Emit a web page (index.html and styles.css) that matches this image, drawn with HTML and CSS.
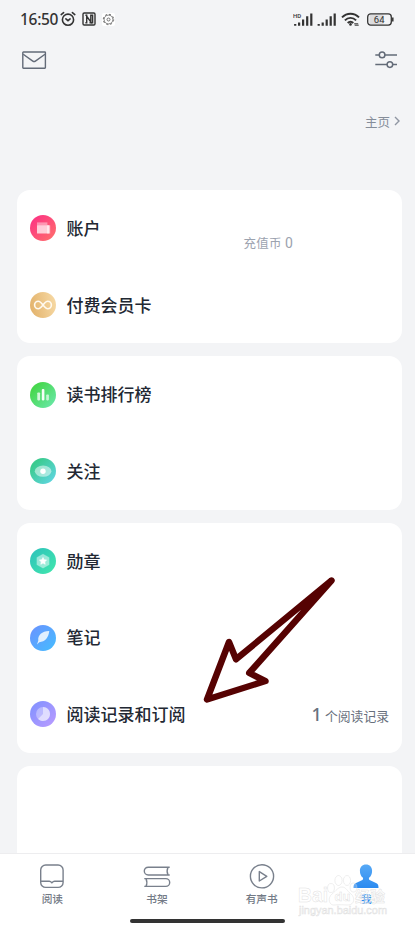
FILE: index.html
```html
<!DOCTYPE html>
<html lang="zh-CN">
<head>
    <meta charset="UTF-8">
    <meta name="viewport" content="width=device-width, initial-scale=1.0">
    <title>我</title>
    <link rel="stylesheet" href="styles.css">
</head>
<body>
    <div class="app">
        <div class="status-bar">
            <div class="status-left">
                <span class="clock">16:50</span>
                <svg class="status-alarm" width="16" height="16" viewBox="0 0 16 16" fill="none" stroke="#333" stroke-width="1.6" stroke-linecap="round">
                    <circle cx="8" cy="8.7" r="5.6"/>
                    <path d="M1.2 3.6 3.6 1.6M14.8 3.6 12.4 1.6M5.9 7.8 8 9.7 10.1 7.9"/>
                </svg>
                <svg class="status-nfc" width="14" height="14" viewBox="0 0 14 14" fill="none" stroke="#333" stroke-width="1.4">
                    <rect x="1" y="1" width="12" height="12" rx="1.2"/>
                    <path d="M3.4 10.8h1.3V4.2L8.8 10V3.3h1.8v7.4H7.5M3.4 3.3h2"/>
                </svg>
                <svg class="status-gear" width="13" height="13" viewBox="0 0 13 13">
                    <rect width="13" height="13" rx="2" fill="#fff"/>
                    <circle cx="6.5" cy="6.5" r="4.4" fill="none" stroke="#666" stroke-width=".8"/>
                    <circle cx="6.5" cy="6.5" r="5.2" fill="none" stroke="#666" stroke-width="1" stroke-dasharray="2 2.08"/>
                    <circle cx="6.5" cy="6.5" r="1.5" fill="none" stroke="#666" stroke-width=".9"/>
                </svg>
            </div>
            <div class="status-right">
                <svg width="20" height="14" viewBox="0 0 20 14" fill="#333">
                    <path d="M1.1 12h2.2v1.7H1.1zM5 10.4h2.2v3.3H5zM9 7.6h2.2v6.1H9zM13.1 4.3h2.2v9.4h-2.2zM17.2 1.6h2.2v12.1h-2.2z"/>
                    <text class="hd-label" x="0" y="5.5">HD</text>
                </svg>
                <svg width="20" height="14" viewBox="0 0 20 14" fill="#333">
                    <path d="M.6 12h2.2v1.7H.6zM4.6 10.4h2.2v3.3H4.6zM8.6 7.6h2.2v6.1H8.6zM12.6 4.3h2.2v9.4h-2.2zM16.6 1.6h2.2v12.1h-2.2z"/>
                </svg>
                <svg width="19" height="14" viewBox="0 0 19 14" fill="none" stroke="#333" stroke-width="1.9">
                    <path d="M1 5.4C5.8.5 13.2.5 18 5.4M3.9 8.3C7.1 5 11.9 5 15.1 8.3M6.7 11C8.3 9.3 10.7 9.3 12.3 11"/>
                    <circle cx="9.5" cy="12.4" r="1.3" fill="#333" stroke="none"/>
                    <path d="M13.2 11.8h4M13.7 13.2h4" stroke-width="1"/>
                </svg>
                <svg class="battery" width="27" height="13" viewBox="0 0 27 13">
                    <path d="M2.5 1.5h14v10h-14z" fill="#dcdcde"/>
                    <rect x=".7" y=".9" width="23.6" height="11.2" rx="3" fill="none" stroke="#333" stroke-width="1.3"/>
                    <path d="M25.8 4.4v4.2" stroke="#333" stroke-width="1.5"/>
                    <text class="battery-level" x="12.2" y="9.8" text-anchor="middle">64</text>
                </svg>
            </div>
        </div>

        <div class="toolbar">
            <svg width="26" height="20" viewBox="0 0 26 20" fill="none" stroke="#636b78" stroke-width="1.4" stroke-linejoin="round">
                <rect x="1.8" y="2" width="22.6" height="16.2" rx=".6"/>
                <path d="m2.2 4.2 9.6 6.9q1.3.9 2.6 0L24 4.2"/>
            </svg>
            <svg width="24" height="20" viewBox="0 0 24 20" fill="none" stroke="#636b78" stroke-width="1.5">
                <path d="M1.3 4.9h4M10.9 4.9H23M1.3 14.6h11.8M18.7 14.6H23"/>
                <circle cx="8.1" cy="4.9" r="2.8"/>
                <circle cx="15.9" cy="14.6" r="2.8"/>
            </svg>
        </div>

        <div class="profile">
            <a href="#" class="home-link">主页
                <svg width="6" height="10" viewBox="0 0 6 10" fill="none" stroke="#8f96a2" stroke-width="1.4"><path d="m1 1 4 4-4 4"/></svg>
            </a>
        </div>

        <div class="cards">
            <div class="card">
                <a href="#" class="row">
                    <svg class="row-icon" viewBox="0 0 26 26">
                        <defs><linearGradient id="g-account" x1="0" y1="0" x2="1" y2="1"><stop offset=".1" stop-color="#fc3483"/><stop offset=".9" stop-color="#ff6b6e"/></linearGradient></defs>
                        <circle cx="13" cy="13" r="13" fill="url(#g-account)"/>
                        <path d="M7 7.4h10.4v3H7z" fill="#fff" opacity=".42"/>
                        <path d="M17 10.3h3.2v8.2H17z" fill="#fff" opacity=".5"/>
                        <rect x="7" y="10.2" width="12.3" height="8.4" rx=".4" fill="#fff" opacity=".72"/>
                    </svg>
                    <span class="row-title">账户</span>
                    <span class="balance">充值币 <span class="balance-amount">0</span></span>
                </a>
                <a href="#" class="row">
                    <svg class="row-icon" viewBox="0 0 26 26">
                        <defs><linearGradient id="g-member" x1="0" y1=".6" x2="1" y2=".4"><stop stop-color="#e3b36c"/><stop offset="1" stop-color="#f6d8a3"/></linearGradient></defs>
                        <circle cx="13" cy="13" r="13" fill="url(#g-member)"/>
                        <path d="M13 13C10.8 10.2 9.8 9.3 8.3 9.3a3.7 3.7 0 0 0 0 7.4c1.5 0 2.5-.9 4.7-3.7s3.2-3.7 4.7-3.7a3.7 3.7 0 0 1 0 7.4c-1.5 0-2.5-.9-4.7-3.7z" fill="none" stroke="#fffaf0" stroke-width="1.6"/>
                    </svg>
                    <span class="row-title">付费会员卡</span>
                </a>
            </div>

            <div class="card">
                <a href="#" class="row">
                    <svg class="row-icon" viewBox="0 0 26 26">
                        <defs><linearGradient id="g-rank" x1="0" y1="0" x2="1" y2="1"><stop offset=".1" stop-color="#42d542"/><stop offset=".9" stop-color="#68e7a5"/></linearGradient></defs>
                        <circle cx="13" cy="13" r="13" fill="url(#g-rank)"/>
                        <rect x="7.3" y="10.4" width="2.8" height="8" rx=".8" fill="#fff" opacity=".75"/>
                        <rect x="11.8" y="7.1" width="2.6" height="11.3" rx=".8" fill="#fff" opacity=".95"/>
                        <rect x="16.2" y="12.4" width="2.7" height="6" rx=".8" fill="#fff" opacity=".65"/>
                    </svg>
                    <span class="row-title">读书排行榜</span>
                </a>
                <a href="#" class="row">
                    <svg class="row-icon" viewBox="0 0 26 26">
                        <defs><linearGradient id="g-follow" x1="0" y1="0" x2="1" y2="1"><stop offset=".2" stop-color="#3bcb8f"/><stop offset=".9" stop-color="#5fd5df"/></linearGradient></defs>
                        <circle cx="13" cy="13" r="13" fill="url(#g-follow)"/>
                        <ellipse cx="13.1" cy="13.2" rx="8.3" ry="5.6" fill="#fff" opacity=".5"/>
                        <circle cx="13" cy="13.2" r="2.7" fill="#fff"/>
                    </svg>
                    <span class="row-title">关注</span>
                </a>
            </div>

            <div class="card">
                <a href="#" class="row">
                    <svg class="row-icon" viewBox="0 0 26 26">
                        <defs><linearGradient id="g-medal" x1="0" y1="0" x2="1" y2="1"><stop offset=".1" stop-color="#2fc5ba"/><stop offset=".9" stop-color="#40e4ae"/></linearGradient></defs>
                        <circle cx="13" cy="13" r="13" fill="url(#g-medal)"/>
                        <path d="m13 6 6.2 3.4v7.4L13 20.2l-6.2-3.4V9.4z" fill="#fff" opacity=".5" stroke="#fff" stroke-opacity=".3" stroke-width=".7" stroke-linejoin="round"/>
                        <path d="m13 9.5 1.1 2.2 2.5.4-1.8 1.7.4 2.5-2.2-1.2-2.2 1.2.4-2.5-1.8-1.7 2.5-.4z" fill="#fff" stroke="#fff" stroke-width=".6" stroke-linejoin="round"/>
                    </svg>
                    <span class="row-title">勋章</span>
                </a>
                <a href="#" class="row">
                    <svg class="row-icon" viewBox="0 0 26 26">
                        <defs><linearGradient id="g-note" x1="0" y1="0" x2="1" y2="1"><stop offset=".1" stop-color="#6896ff"/><stop offset=".9" stop-color="#48b9ff"/></linearGradient></defs>
                        <circle cx="13" cy="13" r="13" fill="url(#g-note)"/>
                        <path d="M19.3 6.1C12.2 5.9 7.6 10.5 8.3 15.4L7 19.5l2.3-2.3c5.8-.1 9.3-4.6 10-11.1z" fill="#fff" opacity=".82"/>
                    </svg>
                    <span class="row-title">笔记</span>
                </a>
                <a href="#" class="row">
                    <svg class="row-icon" viewBox="0 0 26 26">
                        <defs><linearGradient id="g-history" x1="0" y1="0" x2="1" y2="1"><stop offset=".1" stop-color="#8492ff"/><stop offset=".9" stop-color="#b59aff"/></linearGradient></defs>
                        <circle cx="13" cy="13" r="13" fill="url(#g-history)"/>
                        <circle cx="13" cy="13" r="7" fill="#fff" opacity=".35"/>
                        <path d="M13 13V6a7 7 0 1 1-4.95 11.95z" fill="#fff" opacity=".5"/>
                    </svg>
                    <span class="row-title">阅读记录和订阅</span>
                    <span class="row-value"><span class="count">1</span> 个阅读记录</span>
                </a>
            </div>

            <div class="card card-empty"></div>
        </div>

        <div class="tab-bar">
            <a href="#" class="tab">
                <svg width="26" height="26" viewBox="0 0 26 26" fill="none" stroke="#79808c" stroke-width="1.4">
                    <rect x="1.7" y="1" width="22.4" height="22.4" rx="5"/>
                    <path d="M1.8 17.2h8.5q1.2 0 2.6 1.5 1.4-1.5 2.6-1.5H24"/>
                </svg>
                <span>阅读</span>
            </a>
            <a href="#" class="tab">
                <svg width="28" height="26" viewBox="0 0 28 26" fill="none" stroke="#79808c" stroke-width="1.4">
                    <path d="M26.7 3.2H5.2a3.9 3.9 0 0 0 0 7.8h21.5M25 3.2q-1.8 3.9 0 7.8M1.3 14.6h21.5a3.9 3.9 0 0 1 0 7.8H1.3M3 14.6q1.8 3.9 0 7.8"/>
                </svg>
                <span>书架</span>
            </a>
            <a href="#" class="tab">
                <svg width="26" height="26" viewBox="0 0 26 26" fill="none" stroke="#79808c" stroke-width="1.4" stroke-linejoin="round">
                    <circle cx="13" cy="12.3" r="11.6"/>
                    <path d="M10.3 7.6v9.4l7.5-4.7z"/>
                </svg>
                <span>有声书</span>
            </a>
            <a href="#" class="tab active">
                <svg width="26" height="26" viewBox="0 0 26 26">
                    <defs><linearGradient id="g-me" x1="0" y1="0" x2="0" y2="1"><stop stop-color="#57a9f6"/><stop offset="1" stop-color="#2c8bf0"/></linearGradient></defs>
                    <path d="M13 .4c3.8 0 6.1 2.7 6.1 6.3 0 3.1-1.1 5.5-2.8 6.8-.6.5-.5 1.9.3 2.4l6.9 3.3c1.7.8 2 2 2 4.8H.5c0-2.8.3-4 2-4.8l6.9-3.3c.8-.5.9-1.9.3-2.4C8 12.200 6.900 9.800 6.900 6.700 6.900 3.100 9.200.4 13 .4z" fill="url(#g-me)"/>
                </svg>
                <span>我</span>
            </a>
        </div>
        <div class="home-indicator"></div>

        <svg class="arrow" width="140" height="134" viewBox="0 0 140 134" fill="none" stroke="#560202" stroke-width="6.4" stroke-linejoin="round">
            <path d="M129.5 8.5 34 87.300 27 70 5 127.500 63.500 109 47.200 101z"/>
        </svg>

        <svg class="watermark" width="96" height="48" viewBox="0 0 96 48">
            <g>
                <ellipse cx="33" cy="15" rx="3.4" ry="4.5"/>
                <ellipse cx="40.5" cy="7.5" rx="3.6" ry="5"/>
                <ellipse cx="49" cy="7.5" rx="3.6" ry="5"/>
                <ellipse cx="55.5" cy="14.5" rx="3.4" ry="4.5"/>
                <path d="M44 14c4 0 5 4 9 7s4 11-3 11c-4 0-9-.7-13 0-6 1-8-7-3-11 4-3 6-7 10-7z"/>
            </g>
            <text class="watermark-name" x="0" y="29" textLength="30" lengthAdjust="spacingAndGlyphs">Bai</text>
            <text class="watermark-du" x="36.5" y="28">du</text>
            <text class="watermark-cn" x="57" y="28.5" textLength="30">经验</text>
            <text class="watermark-url" x="1" y="40.5" textLength="88" lengthAdjust="spacingAndGlyphs">jingyan.baidu.com</text>
        </svg>
    </div>
</body>
</html>
```

FILE: styles.css
```css
body {
    margin: 0;
    background-color: #f3f4f6;
    color: #222833;
    font-family: Roboto, "Noto Sans CJK SC", sans-serif;
}

a {
    color: inherit;
    text-decoration: none;
}

svg {
    display: block;
    flex-shrink: 0;
}

.app {
    position: relative;
    display: flex;
    flex-direction: column;
    height: 928px;
    overflow: hidden;
}

.status-bar {
    display: flex;
    align-items: center;
    justify-content: space-between;
    height: 38px;
    padding: 0 21px 0 20px;
    box-sizing: border-box;
}

.status-left,
.status-right {
    display: flex;
    align-items: center;
}

.status-right {
    gap: 4px;
}

.clock {
    width: 38px;
    margin-right: 2px;
    color: #333;
    font-family: "Noto Sans", sans-serif;
    font-size: 15.5px;
    font-weight: 500;
    letter-spacing: -0.3px;
    line-height: 20px;
    white-space: nowrap;
}

.status-nfc {
    margin-left: 6px;
}

.status-gear {
    margin-left: 6px;
}

.hd-label {
    font-size: 6px;
    font-weight: 500;
}

.battery {
    margin-left: 3px;
}

.battery-level {
    fill: #333;
    font-size: 9.5px;
}

.toolbar {
    display: flex;
    align-items: center;
    justify-content: space-between;
    height: 44px;
    padding: 0 17px 0 21px;
}

.profile {
    display: flex;
    justify-content: flex-end;
    align-items: flex-start;
    height: 77px;
    padding: 31px 15px 0 0;
}

.home-link {
    display: flex;
    align-items: center;
    gap: 4px;
    height: 16px;
    color: #858d99;
    font-size: 12.5px;
}

.cards {
    flex: 1;
    display: flex;
    flex-direction: column;
    gap: 13px;
    min-height: 0;
    padding: 0 13px 0 17px;
    overflow: hidden;
}

.card {
    flex-shrink: 0;
    background-color: #fff;
    border-radius: 13px;
}

.card-empty {
    height: 110px;
}

.row {
    display: flex;
    align-items: center;
    height: 76.7px;
    padding: 0 13px 0 12.5px;
}

.row-icon {
    width: 26px;
    height: 26px;
    margin-right: 11px;
}

.row-title {
    padding-top: 1px;
    font-size: 17px;
    font-weight: 500;
    line-height: 24px;
}

.balance {
    margin-left: 143px;
    padding-top: 29px;
    color: #9ca3af;
    font-size: 12.5px;
    letter-spacing: 0.2px;
}

.balance-amount {
    font-size: 14px;
}

.row-value {
    margin-left: auto;
    color: #68707d;
    font-size: 12.8px;
}

.count {
    font-family: "Noto Sans", sans-serif;
    font-size: 18px;
    font-weight: 500;
}

.tab-bar {
    display: flex;
    height: 58px;
    padding-top: 10px;
    background-color: #fff;
    border-top: 1px solid #ededef;
    box-sizing: border-box;
}

.tab {
    flex: 0 0 104.7px;
    display: flex;
    flex-direction: column;
    align-items: center;
    gap: 2px;
    color: #737a86;
    font-size: 10.7px;
    font-weight: 500;
    line-height: 16px;
}

.tab.active {
    color: #2f8ff0;
}

.home-indicator {
    display: flex;
    justify-content: center;
    height: 17px;
    padding-top: 8px;
    background-color: #fff;
    box-sizing: border-box;
}

.home-indicator::after {
    content: "";
    width: 155px;
    height: 4px;
    border-radius: 2px;
    background-color: #333;
}

/* annotation drawn over the list */
.arrow {
    position: absolute;
    left: 202px;
    top: 572px;
}

.watermark {
    position: absolute;
    left: 298px;
    top: 873px;
    font-family: "Liberation Sans", "Noto Sans CJK SC", sans-serif;
    font-weight: 700;
    fill: #fff;
    fill-opacity: 0.25;
    stroke: #d8d8d8;
    stroke-opacity: 0.8;
    stroke-width: 0.5;
}

.watermark-name {
    font-size: 21px;
}

.watermark-du {
    font-size: 13px;
}

.watermark-cn {
    font-size: 15px;
}

.watermark-url {
    font-size: 10px;
    font-weight: 400;
}
```
